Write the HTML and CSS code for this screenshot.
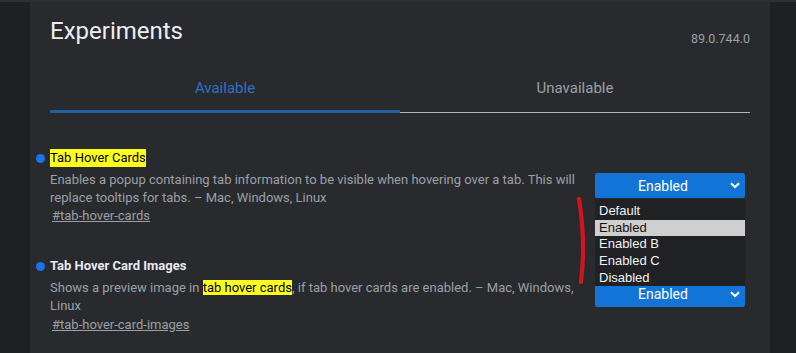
FILE: index.html
```html
<!DOCTYPE html>
<html>
<head>
<meta charset="utf-8">
<title>Experiments</title>
<link rel="stylesheet" href="styles.css">
</head>
<body>
<div class="panel">
  <header class="header">
    <h1 class="title">Experiments</h1>
    <div class="version">89.0.744.0</div>
  </header>
  <nav class="tabs">
    <div class="tab tab-active">Available</div>
    <div class="tab">Unavailable</div>
  </nav>
  <div class="features">
    <div class="feature">
      <div class="feature-text">
        <div class="feature-title"><span class="dot"></span><span class="hl">Tab Hover Cards</span></div>
        <p class="desc">Enables a popup containing tab information to be visible when hovering over a tab. This will replace tooltips for tabs. – Mac, Windows, Linux</p>
        <a class="link" href="#tab-hover-cards">#tab-hover-cards</a>
      </div>
      <div class="select-wrap">
        <div class="select"><span class="select-label">Enabled</span>
          <svg class="chev" width="10" height="7" viewBox="0 0 10 7"><polyline points="1,1.2 5,5 9,1.2" fill="none" stroke="#ffffff" stroke-width="2"/></svg>
        </div>
        <svg class="mark" width="14" height="90" viewBox="0 0 14 90"><path d="M4 2 Q11 44 6 85" fill="none" stroke="#d3141f" stroke-width="4.2" stroke-linecap="round"/></svg>
        <ul class="dropdown">
          <li class="opt">Default</li>
          <li class="opt opt-sel">Enabled</li>
          <li class="opt">Enabled B</li>
          <li class="opt">Enabled C</li>
          <li class="opt">Disabled</li>
        </ul>
      </div>
    </div>
    <div class="feature">
      <div class="feature-text">
        <div class="feature-title"><span class="dot"></span><span class="name-bold">Tab Hover Card Images</span></div>
        <p class="desc">Shows a preview image in <span class="hl">tab hover cards</span>, if tab hover cards are enabled. – Mac, Windows, Linux</p>
        <a class="link" href="#tab-hover-card-images">#tab-hover-card-images</a>
      </div>
      <div class="select-wrap">
        <div class="select"><span class="select-label">Enabled</span>
          <svg class="chev" width="10" height="7" viewBox="0 0 10 7"><polyline points="1,1.2 5,5 9,1.2" fill="none" stroke="#ffffff" stroke-width="2"/></svg>
        </div>
      </div>
    </div>
  </div>
</div>
</body>
</html>
```

FILE: styles.css
```css
* { box-sizing: border-box; }
html, body { margin: 0; padding: 0; }
body {
  background: #1f2023;
  border-top: 2px solid #2e2f33;
  height: 353px;
  overflow: hidden;
  font-family: Roboto, "Noto Sans", Arial, sans-serif;
}
.panel {
  margin-left: 30px;
  width: 740px;
  height: 351px;
  background: #292a2d;
  padding: 0 20px;
}
.header {
  display: flex;
  justify-content: space-between;
  align-items: flex-start;
  padding-top: 15px;
}
.title {
  margin: 0;
  font-size: 24px;
  line-height: 28px;
  font-weight: 400;
  color: #eceef1;
}
.version {
  margin-top: 14px;
  font-size: 12.5px;
  line-height: 16px;
  color: #9aa0a6;
}
.tabs {
  display: flex;
  align-items: flex-start;
}
.tab {
  flex: 1;
  text-align: center;
  font-size: 15px;
  line-height: 20px;
  padding: 31px 0 14px;
  color: #9aa0a6;
  border-bottom: 1px solid #b4b6ba;
}
.tab-active {
  color: #2a71c8;
  padding-bottom: 12px;
  border-bottom: 3px solid #21609f;
}
.features {
  margin-top: 21px;
}
.feature {
  display: flex;
  align-items: center;
  gap: 15px;
  padding: 15px 5px 17px 0;
}
.feature-text {
  flex: 1;
  min-width: 0;
  font-size: 13px;
}
.feature-title {
  display: flex;
  align-items: center;
  gap: 5px;
  margin-left: -14px;
  line-height: 18px;
  color: #e8eaed;
}
.dot {
  width: 9px;
  height: 9px;
  border-radius: 50%;
  background: #1a73e8;
  flex: none;
}
.hl {
  background: #ffff1e;
  color: #000000;
}
.name-bold {
  font-weight: 700;
  color: #e8eaed;
}
.desc {
  margin: 4px 0 0;
  line-height: 17.7px;
  color: #9aa0a6;
}
.link {
  display: inline-block;
  margin: 1px 0 0 2px;
  line-height: 18px;
  color: #9aa0a6;
  text-decoration: underline;
}
.select-wrap {
  position: relative;
  width: 150px;
  flex: none;
  margin-top: -3px;
}
.select {
  height: 25px;
  background: #1274d6;
  border-radius: 2px;
  display: flex;
  align-items: center;
  padding-right: 14px;
  color: #ffffff;
  font-size: 14px;
}
.select-label {
  flex: 1;
  text-align: center;
}
.chev {
  position: absolute;
  right: 5px;
  top: 9px;
}
.mark {
  position: absolute;
  left: -20px;
  top: 24px;
}
.dropdown {
  position: absolute;
  top: 26px;
  left: 0;
  width: 150px;
  margin: 0;
  padding: 4px 0 0;
  list-style: none;
  background: #202124;
  z-index: 2;
  font-family: "Liberation Sans", Arial, sans-serif;
  font-size: 13px;
}
.opt {
  height: 16.6px;
  line-height: 16.6px;
  padding-left: 4px;
  color: #f2f2f2;
}
.opt-sel {
  background: #cfcfcf;
  color: #111111;
}
```
